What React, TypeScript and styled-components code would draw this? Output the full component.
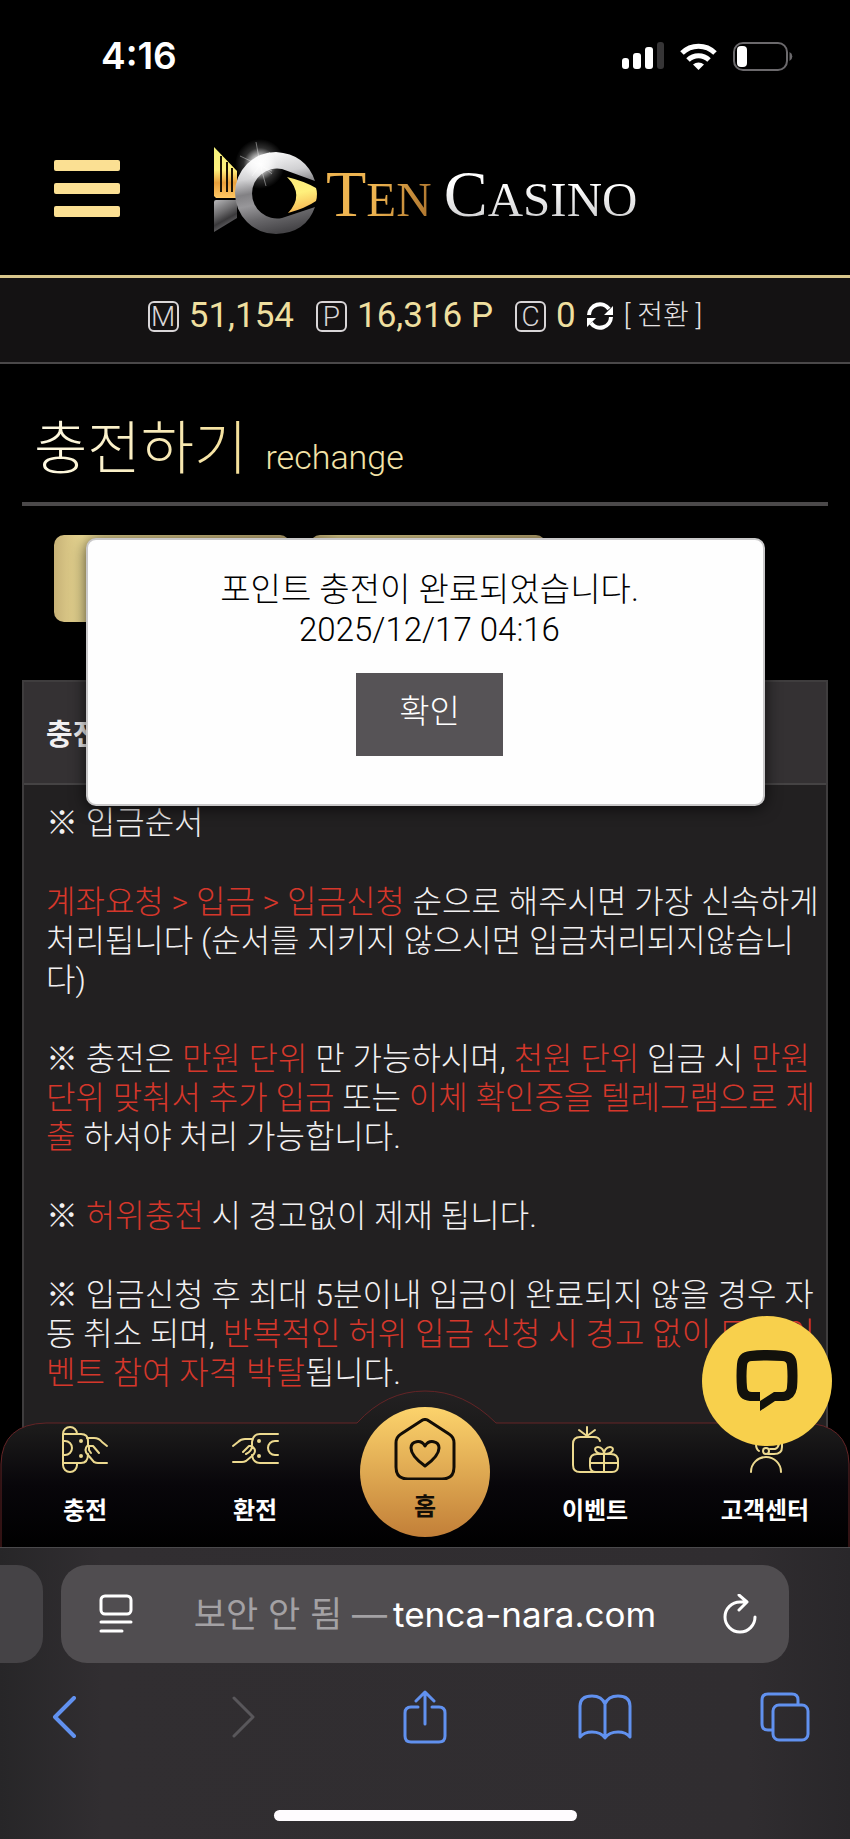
import React from "react";
import styled, { createGlobalStyle } from "styled-components";

const Global = createGlobalStyle`
  * { box-sizing: border-box; }
  html, body { margin: 0; background: #000; }
  body { font-family: Roboto, "Noto Sans CJK KR", sans-serif; font-weight: 300; color: #f2f0f1; }
  button { font: inherit; border: 0; padding: 0; background: none; color: inherit; cursor: pointer; }
  a { color: inherit; text-decoration: none; }
  svg { display: block; flex: none; }
  h1, h2, p { margin: 0; }
`;

const Screen = styled.div`
  display: flex;
  flex-direction: column;
  min-height: 100vh;
  overflow: hidden;
`;

const Site = styled.div`
  position: relative;
  flex: 1;
  display: flex;
  flex-direction: column;
`;

const StatusBar = styled.div`
  display: flex;
  align-items: center;
  justify-content: space-between;
  height: 112px;
  padding: 0 57px 0 101px;
`;

const Clock = styled.time`
  font: 600 37px/44px Inter, sans-serif;
  color: #fff;
`;

const StatusIcons = styled.div`
  display: flex;
  align-items: center;
  gap: 16px;
`;

const Header = styled.header`
  display: flex;
  align-items: center;
  height: 166px;
  padding: 0 54px 10px;
  border-bottom: 3px solid #d8c68c;
`;

const MenuButton = styled.button`
  display: flex;
  flex-direction: column;
  gap: 12px;
  width: 66px;
`;

const MenuLine = styled.span`
  height: 11px;
  border-radius: 2px;
  background: #fbe093;
`;

const Brand = styled.a`
  display: flex;
  align-items: center;
  margin-left: 90px;
  padding-top: 2px;
`;

const BrandName = styled.span`
  display: flex;
  align-items: baseline;
  gap: 12px;
  margin-left: 8px;
  padding-top: 14px;
  font: 400 66px/72px "Liberation Serif", serif;
  white-space: nowrap;
`;

const Word = styled.span<{ $fill: string }>`
  background: ${(p) => p.$fill};
  background-clip: text;
  -webkit-background-clip: text;
  color: transparent;

  small { font-size: 49px; }
`;

const Balances = styled.section`
  display: flex;
  align-items: center;
  justify-content: center;
  height: 86px;
  padding-bottom: 8px;
  border-bottom: 2px solid #4a4849;
  background: #141213;
  font-size: 35px;
  line-height: 40px;
  font-weight: 400;
  color: #efdf9f;
`;

const Coin = styled.span`
  display: grid;
  place-items: center;
  width: 31px;
  height: 31px;
  border: 2px solid #d9d6d8;
  border-radius: 6px;
  font-size: 28px;
  line-height: 28px;
  font-weight: 300;
  color: #d9d6d8;
`;

const Amount = styled.span`
  margin: 0 22px 0 10px;

  &:last-of-type { margin-right: 10px; }
`;

const Convert = styled.button`
  display: flex;
  align-items: center;
  gap: 10px;
  font-size: 28px;
  font-weight: 300;
  color: #e6e3e4;
`;

const Content = styled.main`
  flex: 1;
  display: flex;
  flex-direction: column;
  padding: 0 22px;
`;

const TitleBar = styled.div`
  display: flex;
  align-items: baseline;
  gap: 18px;
  height: 142px;
  padding: 43px 12px 0;
  border-bottom: 4px solid #4b494a;
`;

const Title = styled.h1`
  font-size: 58px;
  line-height: 84px;
  font-weight: 300;
  background: linear-gradient(90deg, #fffbe6, #f4df97);
  background-clip: text;
  -webkit-background-clip: text;
  color: transparent;
`;

const Subtitle = styled.span`
  font-size: 34px;
  color: #f3e3a8;
`;

const Tabs = styled.div`
  display: flex;
  gap: 20px;
  padding: 29px 32px 58px;
`;

const Tab = styled.button`
  width: 236px;
  height: 87px;
  border-radius: 10px;
  background: linear-gradient(90deg, #c7b277, #e9d893 12%, #c0ac74);
  color: #222;
`;

const Panel = styled.section`
  flex: 1;
  border: 2px solid #3f3d3e;
  background: #222021;
`;

const PanelTitle = styled.h2`
  height: 103px;
  padding: 0 22px;
  border-bottom: 2px solid #454344;
  background: #343133;
  font-size: 29px;
  line-height: 106px;
  font-weight: 700;
`;

const Notes = styled.div`
  display: flex;
  flex-direction: column;
  gap: 40px;
  padding: 19px 0 140px 22px;
  font-size: 32px;
  line-height: 39px;
  white-space: nowrap;
`;

const Hot = styled.em`
  font-style: normal;
  color: #d5372b;
`;

const Dialog = styled.div`
  position: absolute;
  top: 538px;
  left: 86px;
  right: 85px;
  display: flex;
  flex-direction: column;
  align-items: center;
  height: 268px;
  padding: 30px 0 0 8px;
  border: 2px solid #c9c8c9;
  border-radius: 10px;
  background: #fefefe;
  box-shadow: 0 2px 16px rgba(0, 0, 0, 0.7);
  font-size: 33px;
  line-height: 40px;
  color: #000;
  text-align: center;
`;

const Confirm = styled.button`
  width: 147px;
  height: 83px;
  margin-top: 23px;
  padding-bottom: 6px;
  background: #565356;
  color: #fff;
`;

const NavBar = styled.nav`
  position: absolute;
  left: 0;
  right: 0;
  bottom: 0;
  height: 157px;
`;

const NavShape = styled.svg`
  position: absolute;
  inset: 0;
  width: 100%;
  height: 100%;
`;

const NavItems = styled.div`
  position: relative;
  display: grid;
  grid-template-columns: repeat(5, 1fr);
  height: 100%;
`;

const NavItem = styled.a`
  display: flex;
  flex-direction: column;
  align-items: center;
  gap: 20px;
  padding-top: 36px;
  font-size: 24px;
  line-height: 36px;
  font-weight: 700;
  color: #fff;
`;

const HomeItem = styled(NavItem)`
  justify-self: center;
  width: 130px;
  height: 130px;
  margin-top: 17px;
  padding-top: 11px;
  gap: 9px;
  border-radius: 50%;
  background: linear-gradient(#fcd36c, #c27f38);
  color: #120d06;
`;

const ChatButton = styled.button`
  position: absolute;
  right: 18px;
  bottom: 101px;
  display: grid;
  place-items: center;
  width: 130px;
  height: 130px;
  border-radius: 50%;
  background: #f8d04c;
`;

const Browser = styled.footer`
  display: flex;
  flex-direction: column;
  align-items: center;
  height: 292px;
  padding-bottom: 18px;
  border-top: 1px solid #4a494b;
  background: linear-gradient(90deg, #272628, #312e31 12%, #302d30 88%, #29272a);
`;

const AddressRow = styled.div`
  display: flex;
  gap: 18px;
  width: 100%;
  padding: 17px 61px 0 0;
`;

const PreviousTab = styled.div`
  width: 43px;
  height: 98px;
  border-radius: 0 26px 26px 0;
  background: #454346;
`;

const AddressBar = styled.div`
  flex: 1;
  display: flex;
  align-items: center;
  justify-content: space-between;
  height: 98px;
  padding: 0 32px 0 38px;
  border-radius: 26px;
  background: #504d50;
`;

const Address = styled.span`
  display: flex;
  align-items: center;
  gap: 6px;
  padding-right: 6px;
  font: 400 35px/44px Inter, "Noto Sans CJK KR", sans-serif;
  color: #fff;
`;

const Muted = styled.span`
  color: #a3a1a4;
`;

const Toolbar = styled.div`
  display: flex;
  align-items: center;
  justify-content: space-between;
  width: 100%;
  height: 108px;
  padding: 0 38px 0 37px;
  color: #6191ef;
`;

const ToolButton = styled.button`
  display: grid;
  place-items: center;
  width: 54px;
  height: 54px;
`;

const HomeIndicator = styled.div`
  width: 303px;
  height: 11px;
  margin-top: auto;
  border-radius: 6px;
  background: #fffcff;
`;

const line = { fill: "none", stroke: "currentColor", strokeLinecap: "round", strokeLinejoin: "round" } as const;

const Signal = () => (
  <svg width="42" height="28" viewBox="0 0 42 28" fill="#fff">
    <rect x="0" y="16" width="7" height="11" rx="3" />
    <rect x="11" y="11" width="8" height="16" rx="3" />
    <rect x="23" y="5" width="8" height="22" rx="3" />
    <rect x="35" y="0" width="7" height="27" rx="3" fill="#363536" />
  </svg>
);

const Wifi = () => (
  <svg width="37" height="27" viewBox="0 0 37 27" fill="none" stroke="#fff" strokeWidth="5">
    <path d="M2 10a23.500 23.500 0 0 1 33 0" />
    <path d="M8 17a15 15 0 0 1 21 0" />
    <path d="M18.500 27l-5.500-5.400a8 8 0 0 1 11 0z" fill="#fff" stroke="none" />
  </svg>
);

const Battery = () => (
  <svg width="60" height="29" viewBox="0 0 60 29">
    <rect x="1" y="1" width="53" height="27" rx="9" fill="none" stroke="#6b696c" strokeWidth="2" />
    <rect x="4" y="4" width="10" height="21" rx="4" fill="#fff" />
    <path d="M56.500 10v9a5 5 0 0 0 0-9z" fill="#6b696c" />
  </svg>
);

const Emblem = () => (
  <svg width="108" height="96" viewBox="0 0 108 96" overflow="visible">
    <defs>
      <linearGradient id="gold" x1="0" y1="0" x2="0" y2="1">
        <stop offset="0" stopColor="#f4f27c" />
        <stop offset=".45" stopColor="#fff07c" />
        <stop offset=".7" stopColor="#e9a03c" />
        <stop offset="1" stopColor="#ffc864" />
      </linearGradient>
      <linearGradient id="eye" x1="0" y1="0" x2=".2" y2="1">
        <stop offset="0" stopColor="#fbe97a" />
        <stop offset=".5" stopColor="#fff07c" />
        <stop offset="1" stopColor="#f6b954" />
      </linearGradient>
      <linearGradient id="silver" x1=".25" y1="0" x2=".45" y2="1">
        <stop offset="0" stopColor="#fff" />
        <stop offset=".3" stopColor="#d0d0d2" />
        <stop offset=".48" stopColor="#828184" />
        <stop offset=".62" stopColor="#98979a" />
        <stop offset=".8" stopColor="#69686b" />
        <stop offset="1" stopColor="#454447" />
      </linearGradient>
      <linearGradient id="base" x1="0" y1="0" x2=".4" y2="1">
        <stop offset="0" stopColor="#b8b8ba" />
        <stop offset=".45" stopColor="#6b6a6c" />
        <stop offset=".7" stopColor="#39383a" />
        <stop offset="1" stopColor="#737275" />
      </linearGradient>
      <radialGradient id="flare">
        <stop offset="0" stopColor="#fff" />
        <stop offset=".35" stopColor="#fff" stopOpacity=".7" />
        <stop offset=".65" stopColor="#fff" stopOpacity=".18" />
        <stop offset="1" stopColor="#fff" stopOpacity="0" />
      </radialGradient>
    </defs>
    <path d="M4 5l23 24v27H6l-2-2z" fill="url(#gold)" />
    <path d="M11 14v36M17 20v30M22 26v24" stroke="#1a1204" strokeWidth="2" />
    <path d="M4 60q0-2 2-2h21v18L4 90z" fill="url(#base)" />
    <path
      d="M66 10a41 41 0 1 0 0 82q30-1 39-27L72 76a25 25 0 1 1 0-49l33 12Q96 12 66 10z"
      fill="url(#silver)"
    />
    <path d="M77 35q17 4 29 11 2 6 0 13-10 7-28 12 17-18-1-36z" fill="url(#eye)" />
    <circle cx="50" cy="22" r="25" fill="url(#flare)" />
    <path d="M46 0l4 22M30 14l32 15M50 22l6 22M42 34l18-24M50 22l12 10" stroke="#fff" strokeOpacity=".4" />
  </svg>
);

const Refresh = () => (
  <svg width="28" height="30" viewBox="0 0 28 30" fill="none" stroke="#fff" strokeWidth="4">
    <path d="M3 14a11 11 0 0 1 20-6M25 16a11 11 0 0 1-20 6" />
    <path d="M27 5v9h-9zM1 26V17h9z" fill="#fff" stroke="none" />
  </svg>
);

const DepositIcon = () => (
  <svg width="47" height="47" viewBox="0 0 47 47" {...line} strokeWidth="2" color="#ecd98f">
    <path d="M1 8v31M1 8a7 7 0 0 1 14 0M1 8h18q7 0 7 7v5M26 28q0 9-7 9H1M1 39a7 7 0 0 0 14 0v-2M1 15h2a7 7 0 0 1 0 14H1" />
    <path d="M25 12h7q5 0 8 4l5 4M26 19q-5 5 0 10l6 7q2 1 4 1h9M27 20l4 0 6 7M27 20v4l2 3" />
    <path d="M19 15v.1M19 30v.1" strokeWidth="4" />
  </svg>
);

const WithdrawIcon = () => (
  <svg width="47" height="47" viewBox="0 0 47 47" {...line} strokeWidth="2" color="#ecd98f">
    <path d="M46 8H28q-7 0-8 8v3M20 29q1 8 8 8h18M46 15h-3a7 7 0 0 0 0 14h3" />
    <path d="M20 13h-7q-4 0-7 3l-5 4M20 20h-3l-6 6M20 20q6 5 0 10l-6 5q-2 1-4 1H1M20 20q0 5-6 8" />
    <path d="M27 15v.1M27 30v.1" strokeWidth="4" />
  </svg>
);

const EventIcon = () => (
  <svg width="47" height="47" viewBox="0 0 47 47" {...line} strokeWidth="2" color="#ecd98f">
    <path d="M24 46H8q-7 0-7-7V18q0-7 7-7h14q5 0 6 4M15 1v9M7 4l8 6 8-6" />
    <path d="M25 28h14q7 0 7 7v5q0 6-6 6H24q-6 0-6-6v-5q0-7 7-7zM32 28v18M18 37h28M32 28c-10 0-11-7-6-7 4 0 6 4 6 7zM32 28c10 0 11-7 6-7-4 0-6 4-6 7z" />
  </svg>
);

const SupportIcon = () => (
  <svg width="47" height="47" viewBox="0 0 47 47" {...line} strokeWidth="2" color="#ecd98f">
    <path d="M9 46a15 15 0 0 1 30 0M12 16a12 12 0 1 1 24 0M14 18q0 5 3 7M40 17v4q0 7-8 7h-6" />
    <circle cx="24" cy="25" r="3" />
    <path d="M37 18q-1 4-4 5h-5" />
  </svg>
);

const HomeIcon = () => (
  <svg width="62" height="62" viewBox="0 0 62 62" {...line} strokeWidth="3">
    <path d="M27 3q4-3 8 0l20 13q5 3 5 9v24q0 12-12 12H14Q2 61 2 49V25q0-6 5-9z" />
    <path d="M31 48C24 43 17 36 17 30c0-7 10-9 14-2 4-7 14-5 14 2 0 6-7 13-14 18z" />
  </svg>
);

const ChatIcon = () => (
  <svg width="62" height="62" viewBox="0 0 62 62">
    <path
      fillRule="evenodd"
      d="M14 1Q31-1 48 1q12 1 13 13 1 12 0 24-2 12-13 13h-9L24 61V42h-8q-5 0-5-5-1-11 0-21 0-5 5-5 15-1 30 0 5 0 5 5 1 10 0 21 0 5-5 5h-8l-14 9H14Q2 50 1 38 0 26 1 14 2 2 14 1z"
      fill="#12110c"
    />
  </svg>
);

const PageIcon = () => (
  <svg width="34" height="40" viewBox="0 0 34 40" {...line} color="#fff" strokeWidth="3">
    <rect x="2" y="2" width="30" height="18" rx="4" />
    <path d="M2 28h30M2 37h21" />
  </svg>
);

const ReloadIcon = () => (
  <svg width="34" height="40" viewBox="0 0 34 40" {...line} color="#fff" strokeWidth="3">
    <path d="M23 8h-6A15 15 0 1 0 32 23M16 1l8 7-8 8" />
  </svg>
);

const BackIcon = () => (
  <svg width="26" height="42" viewBox="0 0 26 42" {...line} strokeWidth="4">
    <path d="M23 2L4 21l19 19" />
  </svg>
);

const ForwardIcon = () => (
  <svg width="26" height="42" viewBox="0 0 26 42" {...line} strokeWidth="3" color="#59575b">
    <path d="M3 2l19 19L3 40" />
  </svg>
);

const ShareIcon = () => (
  <svg width="44" height="54" viewBox="0 0 44 54" {...line} strokeWidth="3">
    <path d="M15 17H8q-6 0-6 6v23q0 6 6 6h28q6 0 6-6V23q0-6-6-6h-7M22 34V2M13 11l9-9 9 9" />
  </svg>
);

const BookIcon = () => (
  <svg width="54" height="46" viewBox="0 0 54 46" {...line} strokeWidth="3">
    <path d="M27 10Q24 2 14 2 2 2 2 12v31q4-5 12-5 9 0 13 6 4-6 13-6 8 0 12 5V12Q52 2 40 2q-10 0-13 8v33" />
  </svg>
);

const TabsIcon = () => (
  <svg width="50" height="50" viewBox="0 0 50 50" {...line} strokeWidth="3">
    <path d="M12 38H8q-6 0-6-6V8q0-6 6-6h24q6 0 6 6v4" />
    <rect x="13" y="13" width="35" height="35" rx="6" />
  </svg>
);

export default function App() {
  return (
    <Screen>
      <Global />
      <Site>
        <StatusBar>
          <Clock>4:16</Clock>
          <StatusIcons>
            <Signal />
            <Wifi />
            <Battery />
          </StatusIcons>
        </StatusBar>
        <Header>
          <MenuButton aria-label="Menu">
            <MenuLine />
            <MenuLine />
            <MenuLine />
          </MenuButton>
          <Brand href="#">
            <Emblem />
            <BrandName>
              <Word $fill="linear-gradient(100deg, #eeb450 45%, #a86f2b)">
                T<small>EN</small>
              </Word>
              <Word $fill="linear-gradient(#fff 35%, #b9b9bb)">
                C<small>ASINO</small>
              </Word>
            </BrandName>
          </Brand>
        </Header>
        <Balances>
          <Coin>M</Coin>
          <Amount>51,154</Amount>
          <Coin>P</Coin>
          <Amount>16,316 P</Amount>
          <Coin>C</Coin>
          <Amount>0</Amount>
          <Convert>
            <Refresh />[ 전환 ]
          </Convert>
        </Balances>
        <Content>
          <TitleBar>
            <Title>충전하기</Title>
            <Subtitle>rechange</Subtitle>
          </TitleBar>
          <Tabs>
            <Tab aria-label="충전" />
            <Tab aria-label="환전" />
          </Tabs>
          <Panel>
            <PanelTitle>충전</PanelTitle>
            <Notes>
              <p>※ 입금순서</p>
              <p>
                <Hot>계좌요청 &gt; 입금 &gt; 입금신청</Hot> 순으로 해주시면 가장 신속하게
                <br />
                처리됩니다 (순서를 지키지 않으시면 입금처리되지않습니
                <br />
                다)
              </p>
              <p>
                ※ 충전은 <Hot>만원 단위</Hot> 만 가능하시며, <Hot>천원 단위</Hot> 입금 시 <Hot>만원</Hot>
                <br />
                <Hot>단위 맞춰서 추가 입금</Hot> 또는 <Hot>이체 확인증을 텔레그램으로 제</Hot>
                <br />
                <Hot>출</Hot> 하셔야 처리 가능합니다.
              </p>
              <p>
                ※ <Hot>허위충전</Hot> 시 경고없이 제재 됩니다.
              </p>
              <p>
                ※ 입금신청 후 최대 5분이내 입금이 완료되지 않을 경우 자
                <br />
                동 취소 되며, <Hot>반복적인 허위 입금 신청 시 경고 없이 모든 이</Hot>
                <br />
                <Hot>벤트 참여 자격 박탈</Hot>됩니다.
              </p>
            </Notes>
          </Panel>
        </Content>
        <Dialog role="alertdialog">
          <p>포인트 충전이 완료되었습니다.</p>
          <p>2025/12/17 04:16</p>
          <Confirm>확인</Confirm>
        </Dialog>
        <NavBar>
          <NavShape viewBox="0 0 850 157" preserveAspectRatio="none">
            <defs>
              <linearGradient id="nav" x1="0" y1="0" x2="0" y2="1">
                <stop offset="0" stopColor="#232122" />
                <stop offset=".25" stopColor="#1b1a1a" />
                <stop offset=".6" stopColor="#08060a" />
                <stop offset="1" stopColor="#000" />
              </linearGradient>
            </defs>
            <path
              d="M1 158V74Q2 34 46 33H357Q386 1 425 1T496 33H804Q848 34 849 74V158z"
              fill="url(#nav)"
              stroke="#642426"
            />
          </NavShape>
          <NavItems>
            <NavItem href="#">
              <DepositIcon />
              충전
            </NavItem>
            <NavItem href="#">
              <WithdrawIcon />
              환전
            </NavItem>
            <HomeItem href="#">
              <HomeIcon />홈
            </HomeItem>
            <NavItem href="#">
              <EventIcon />
              이벤트
            </NavItem>
            <NavItem href="#">
              <SupportIcon />
              고객센터
            </NavItem>
          </NavItems>
        </NavBar>
        <ChatButton aria-label="Chat">
          <ChatIcon />
        </ChatButton>
      </Site>
      <Browser>
        <AddressRow>
          <PreviousTab />
          <AddressBar>
            <PageIcon />
            <Address>
              <Muted>보안 안 됨 —</Muted>tenca-nara.com
            </Address>
            <button aria-label="Reload">
              <ReloadIcon />
            </button>
          </AddressBar>
        </AddressRow>
        <Toolbar>
          <ToolButton aria-label="Back">
            <BackIcon />
          </ToolButton>
          <ToolButton aria-label="Forward">
            <ForwardIcon />
          </ToolButton>
          <ToolButton aria-label="Share">
            <ShareIcon />
          </ToolButton>
          <ToolButton aria-label="Bookmarks">
            <BookIcon />
          </ToolButton>
          <ToolButton aria-label="Tabs">
            <TabsIcon />
          </ToolButton>
        </Toolbar>
        <HomeIndicator />
      </Browser>
    </Screen>
  );
}
